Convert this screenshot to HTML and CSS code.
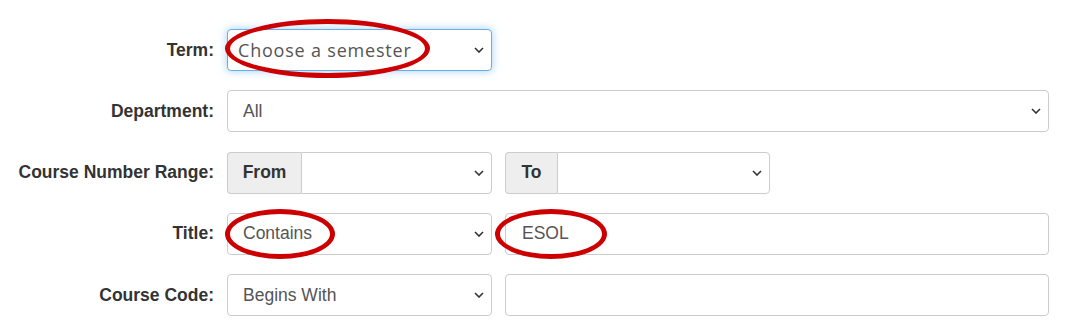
FILE: index.html
```html
<!DOCTYPE html>
<html>
<head>
<meta charset="utf-8">
<link rel="stylesheet" href="styles.css">
</head>
<body>
<form class="form">
  <div class="row">
    <label class="lbl">Term:</label>
    <div class="ctrls">
      <div class="cell narrow">
        <div class="sel focus term"><span>Choose a semester</span><svg class="chev" viewBox="0 0 10 6"><path d="M1 1 L5 5 L9 1"/></svg></div>
        <div class="ring ring-term"></div>
      </div>
    </div>
  </div>
  <div class="row">
    <label class="lbl">Department:</label>
    <div class="ctrls">
      <div class="sel wide"><span>All</span><svg class="chev" viewBox="0 0 10 6"><path d="M1 1 L5 5 L9 1"/></svg></div>
    </div>
  </div>
  <div class="row">
    <label class="lbl">Course Number Range:</label>
    <div class="ctrls">
      <div class="group narrow">
        <div class="addon from">From</div>
        <div class="sel grp"><span></span><svg class="chev" viewBox="0 0 10 6"><path d="M1 1 L5 5 L9 1"/></svg></div>
      </div>
      <div class="group narrow">
        <div class="addon to">To</div>
        <div class="sel grp"><span></span><svg class="chev" viewBox="0 0 10 6"><path d="M1 1 L5 5 L9 1"/></svg></div>
      </div>
    </div>
  </div>
  <div class="row">
    <label class="lbl">Title:</label>
    <div class="ctrls">
      <div class="cell narrow">
        <div class="sel"><span>Contains</span><svg class="chev" viewBox="0 0 10 6"><path d="M1 1 L5 5 L9 1"/></svg></div>
        <div class="ring ring-title"></div>
      </div>
      <div class="cell grow">
        <div class="inp"><span>ESOL</span></div>
        <div class="ring ring-esol"></div>
      </div>
    </div>
  </div>
  <div class="row">
    <label class="lbl">Course Code:</label>
    <div class="ctrls">
      <div class="cell narrow">
        <div class="sel"><span>Begins With</span><svg class="chev" viewBox="0 0 10 6"><path d="M1 1 L5 5 L9 1"/></svg></div>
      </div>
      <div class="cell grow">
        <div class="inp"><span></span></div>
      </div>
    </div>
  </div>
</form>
</body>
</html>
```
FILE: styles.css
```css
* { box-sizing: border-box; }
html, body { margin: 0; padding: 0; background: #fff; }
body { font-family: "Liberation Sans", Arial, sans-serif; font-size: 17.5px; color: #555; }
.form { padding-top: 29px; display: flex; flex-direction: column; gap: 19.25px; }
.row { display: grid; grid-template-columns: 214px 822px; column-gap: 13px; align-items: center; height: 42px; }
.lbl { text-align: right; font-weight: bold; color: #333; font-size: 17.5px; }
.ctrls { display: flex; gap: 13px; height: 42px; }
.cell { position: relative; height: 42px; }
.narrow { width: 265px; flex: none; }
.grow { flex: 1; }
.sel, .inp {
  height: 42px; border: 1px solid #ccc; border-radius: 4px; background: #fff;
  display: flex; align-items: center; padding: 0 7px 0 15px; color: #555;
}
.sel span { flex: 1; white-space: nowrap; }
.wide { width: 822px; }
.chev { width: 10px; height: 6px; fill: none; stroke: #333; stroke-width: 1.6; flex: none; }
.focus { border-color: #66afe9; box-shadow: 0 0 8px rgba(102,175,233,.6); }
.term { padding-left: 10px; font-family: "Open Sans", sans-serif; font-size: 18px; letter-spacing: 0.8px; color: #555; }
.inp { padding-left: 16px; }
.group { display: flex; height: 42px; }
.addon {
  background: #eee; border: 1px solid #ccc; border-right: none; border-radius: 4px 0 0 4px;
  display: flex; align-items: center; justify-content: center; font-weight: bold; color: #333;
  flex: none;
}
.from { width: 74px; }
.to { width: 52px; }
.grp { flex: 1; border-radius: 0 4px 4px 0; }
.ring { position: absolute; border: 5px solid #cc0000; border-radius: 50%; pointer-events: none; }
.ring-term { left: -2px; top: -10px; width: 205px; height: 59px; }
.ring-title { left: -2px; top: -4px; width: 110px; height: 50px; }
.ring-esol { left: -10px; top: -4px; width: 112px; height: 50px; }
```
